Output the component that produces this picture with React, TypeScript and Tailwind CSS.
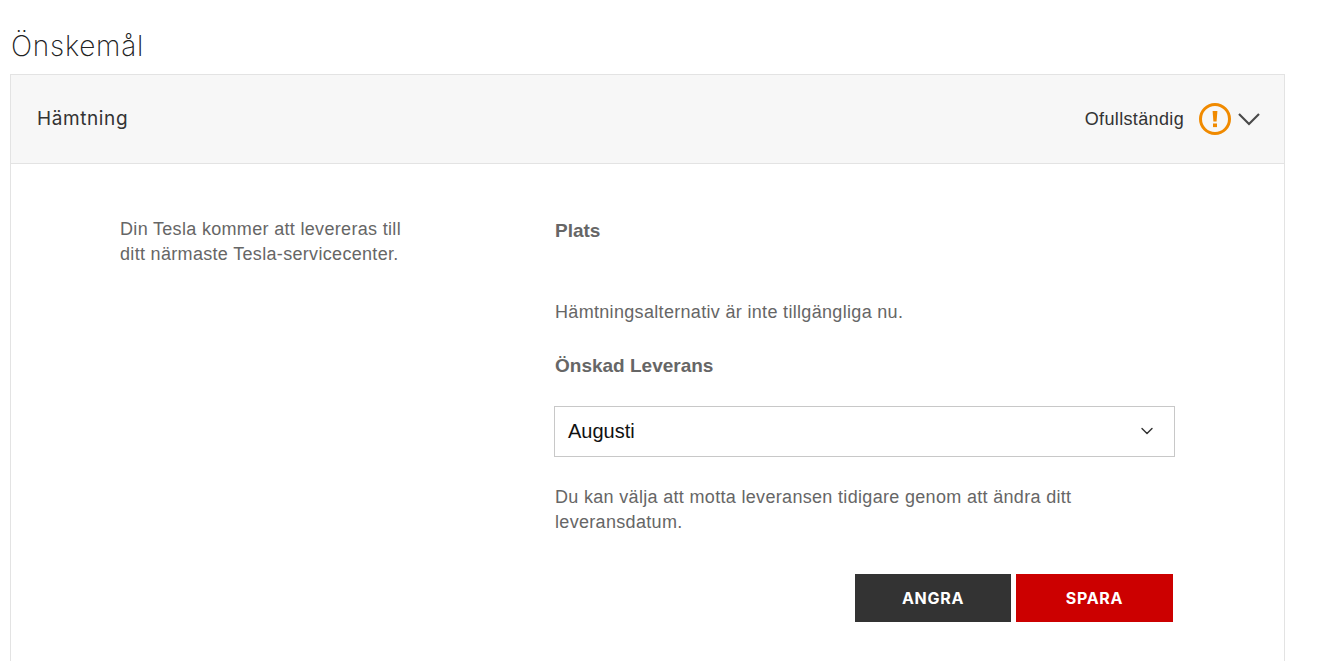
import { ChevronDown } from 'lucide-react'

const sans = "font-['Liberation_Sans',Arial,sans-serif]"
const bodyText = 'text-[18px] tracking-[0.32px] text-[#666]'
const subHeading = 'pl-px text-[19px] font-bold leading-[28px] text-[#666]'

export default function App() {
  return (
    <div className={`h-[661px] overflow-hidden bg-white pl-[10px] pr-[46px] ${sans}`}>
      <h1 className="h-[74px] pt-[28px] pl-px font-['Inter',sans-serif] text-[28px] font-extralight leading-[36px] tracking-[0.75px] text-[#222]">
        Önskemål
      </h1>

      <div className="h-[587px] border-x border-t border-[#e3e3e3]">
        <div className="flex h-[89px] items-center justify-between border-b border-[#e3e3e3] bg-[#f7f7f7] pl-[26px] pr-[24px]">
          <span className="font-['Inter',sans-serif] text-[19px] leading-6 tracking-[0.6px] text-[#333]">Hämtning</span>
          <div className="flex items-center">
            <span className="text-[18px] leading-6 tracking-[0.35px] text-[#333]">Ofullständig</span>
            <svg className="ml-[15px]" width="32" height="32" viewBox="0 0 32 32" fill="none">
              <circle cx="16" cy="16" r="14.5" stroke="#f08a00" strokeWidth="3" />
              <path d="M13.6 8h4.8l-.8 10.5h-3.2z" fill="#f08a00" />
              <rect x="14" y="20.5" width="4" height="3.6" fill="#f08a00" />
            </svg>
            <svg className="ml-[7px]" width="22" height="14" viewBox="0 0 22 14" fill="none" stroke="#4a4a4a" strokeWidth="2.2">
              <path d="M1 2l10 10L21 2" />
            </svg>
          </div>
        </div>

        <div className="flex pl-[109px]">
          <p className={`w-[434px] shrink-0 pt-[53px] leading-[25px] ${bodyText}`}>
            Din Tesla kommer att levereras till
            <br />
            ditt närmaste Tesla-servicecenter.
          </p>

          <div className="w-[621px]">
            <h2 className={`pt-[53px] ${subHeading}`}>Plats</h2>
            <p className={`pl-px pt-[53px] leading-[28px] ${bodyText}`}>
              Hämtningsalternativ är inte tillgängliga nu.
            </p>
            <h2 className={`pt-[26px] ${subHeading}`}>Önskad Leverans</h2>

            <div className="mt-[26px] flex h-[51px] items-center justify-between border border-[#c8c8c8] pb-[2px] pl-[13px] pr-[17px]">
              <span className="text-[20px] leading-6 text-[#111]">Augusti</span>
              <ChevronDown size={20} strokeWidth={1.7} className="text-[#333]" />
            </div>

            <p className={`pl-px pt-[28px] leading-[25px] ${bodyText}`}>
              Du kan välja att motta leveransen tidigare genom att ändra ditt
              <br />
              leveransdatum.
            </p>

            <div className="mt-[39px] flex justify-end gap-[5px] pr-[2px]">
              <button className="h-[48px] w-[156px] bg-[#333] font-['Inter',sans-serif] text-[16px] font-bold tracking-[0.7px] text-white">
                ANGRA
              </button>
              <button className="h-[48px] w-[157px] bg-[#cc0000] font-['Inter',sans-serif] text-[16px] font-bold tracking-[0.7px] text-white">
                SPARA
              </button>
            </div>
          </div>
        </div>
      </div>
    </div>
  )
}
